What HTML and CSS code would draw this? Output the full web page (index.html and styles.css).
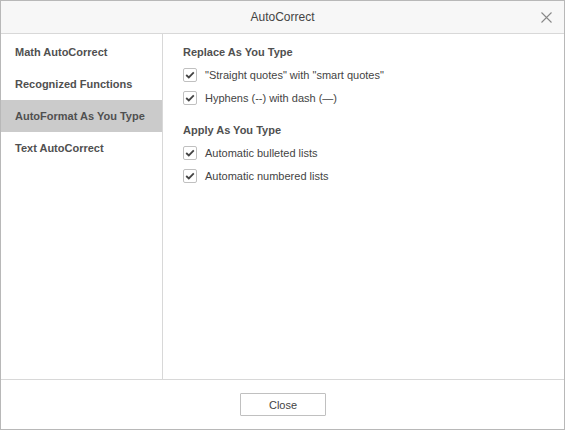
FILE: index.html
```html
<!DOCTYPE html>
<html>
<head>
<meta charset="utf-8">
<link rel="stylesheet" href="styles.css">
</head>
<body>
<div class="dialog">
  <div class="header">
    <span class="title">AutoCorrect</span>
    <span class="close-x">
      <svg width="11" height="11" viewBox="0 0 11 11"><path d="M0.5 0.5 L10.5 10.5 M10.5 0.5 L0.5 10.5" stroke="#888" stroke-width="1.1" fill="none"/></svg>
    </span>
  </div>
  <div class="body">
    <div class="side">
      <div class="item">Math AutoCorrect</div>
      <div class="item">Recognized Functions</div>
      <div class="item selected">AutoFormat As You Type</div>
      <div class="item">Text AutoCorrect</div>
    </div>
    <div class="content">
      <div class="section-title">Replace As You Type</div>
      <div class="row"><span class="cb"><svg width="10" height="8" viewBox="0 0 10 8"><path d="M1.2 4 L3.8 6.4 L8.8 1.4" stroke="#444" stroke-width="1.8" fill="none"/></svg></span><span class="label">"Straight quotes" with "smart quotes"</span></div>
      <div class="row"><span class="cb"><svg width="10" height="8" viewBox="0 0 10 8"><path d="M1.2 4 L3.8 6.4 L8.8 1.4" stroke="#444" stroke-width="1.8" fill="none"/></svg></span><span class="label">Hyphens (--) with dash (—)</span></div>
      <div class="section-title second">Apply As You Type</div>
      <div class="row"><span class="cb"><svg width="10" height="8" viewBox="0 0 10 8"><path d="M1.2 4 L3.8 6.4 L8.8 1.4" stroke="#444" stroke-width="1.8" fill="none"/></svg></span><span class="label">Automatic bulleted lists</span></div>
      <div class="row"><span class="cb"><svg width="10" height="8" viewBox="0 0 10 8"><path d="M1.2 4 L3.8 6.4 L8.8 1.4" stroke="#444" stroke-width="1.8" fill="none"/></svg></span><span class="label">Automatic numbered lists</span></div>
    </div>
  </div>
  <div class="footer">
    <button class="btn">Close</button>
  </div>
</div>
</body>
</html>
```
FILE: styles.css
```css
html, body {
  margin: 0;
  padding: 0;
  background: #fff;
}
body {
  font-family: "Liberation Sans", Arial, sans-serif;
  color: #444;
}
.dialog {
  width: 565px;
  height: 430px;
  box-sizing: border-box;
  border: 1px solid #b8b8b8;
  display: flex;
  flex-direction: column;
  background: #fff;
}
.header {
  height: 32px;
  flex: none;
  background: #f7f7f7;
  border-bottom: 1px solid #d8d8d8;
  display: flex;
  align-items: center;
  justify-content: center;
  position: relative;
}
.title {
  font-size: 12px;
  color: #444;
}
.close-x {
  position: absolute;
  right: 12px;
  top: 11px;
  width: 11px;
  height: 11px;
  display: flex;
}
.body {
  flex: 1;
  display: flex;
  min-height: 0;
}
.side {
  width: 161px;
  flex: none;
  border-right: 1px solid #d8d8d8;
  padding-top: 2px;
}
.item {
  height: 32px;
  line-height: 32px;
  padding-left: 14px;
  font-size: 11px;
  font-weight: bold;
  color: #505050;
}
.item.selected {
  background: #cbcbcb;
}
.content {
  flex: 1;
  padding: 10px 0 0 20px;
}
.section-title {
  font-size: 11px;
  font-weight: bold;
  color: #505050;
  height: 16px;
  line-height: 16px;
  margin-bottom: 3px;
}
.section-title.second {
  margin-top: 13px;
}
.row {
  height: 23px;
  display: flex;
  align-items: center;
}
.cb {
  width: 12px;
  height: 12px;
  border: 1px solid #c0c0c0;
  border-radius: 2px;
  background: #fff;
  display: flex;
  align-items: center;
  justify-content: center;
  flex: none;
  margin-right: 8px;
}
.label {
  font-size: 11px;
  color: #444;
}
.footer {
  height: 49px;
  flex: none;
  border-top: 1px solid #d8d8d8;
  display: flex;
  align-items: center;
  justify-content: center;
}
.btn {
  width: 86px;
  height: 23px;
  border: 1px solid #c0c0c0;
  border-radius: 1px;
  background: #fff;
  font-family: "Liberation Sans", Arial, sans-serif;
  font-size: 11px;
  color: #444;
  padding: 0;
  margin-left: 1px;
}
```
